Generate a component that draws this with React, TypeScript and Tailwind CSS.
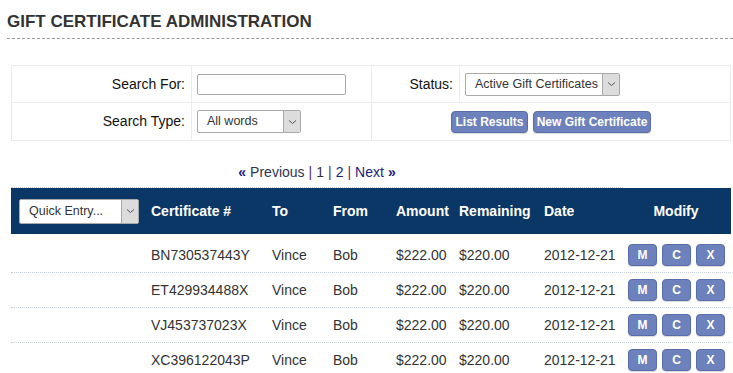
import React from 'react';

const rows = [
  { cert: 'BN730537443Y', to: 'Vince', from: 'Bob', amount: '$222.00', remaining: '$220.00', date: '2012-12-21' },
  { cert: 'ET429934488X', to: 'Vince', from: 'Bob', amount: '$222.00', remaining: '$220.00', date: '2012-12-21' },
  { cert: 'VJ453737023X', to: 'Vince', from: 'Bob', amount: '$222.00', remaining: '$220.00', date: '2012-12-21' },
  { cert: 'XC396122043P', to: 'Vince', from: 'Bob', amount: '$222.00', remaining: '$220.00', date: '2012-12-21' },
];

const cols = 'grid grid-cols-[140px_121px_61px_63px_63px_85px_85px_102px]';

const FakeSelect: React.FC<{ label: string; className: string }> = ({ label, className }) => (
  <div className={`flex items-stretch bg-white border border-[#a9a9a9] rounded-[2px] font-normal ${className}`}>
    <div className="flex-1 flex items-center pl-[9px] text-[12.5px] text-[#333] whitespace-nowrap overflow-hidden">
      {label}
    </div>
    <div className="w-[17px] flex items-center justify-center bg-[#dcdcdc] border-l border-[#a9a9a9]">
      <svg width="9" height="6" viewBox="0 0 9 6" fill="none">
        <path d="M1 1.5 L4.5 4.5 L8 1.5" stroke="#555" strokeWidth="1" />
      </svg>
    </div>
  </div>
);

const BlueButton: React.FC<{ children: React.ReactNode; className?: string }> = ({ children, className }) => (
  <button
    className={`h-[22px] bg-[#6d82bc] border border-[#5a6dab] rounded-[4px] text-white font-bold text-[12px] flex items-center justify-center shadow-[0_1px_1px_rgba(0,0,0,0.15)] ${className ?? ''}`}
  >
    {children}
  </button>
);

export default function App() {
  return (
    <div className="w-[733px] h-[373px] overflow-hidden bg-white pl-[7px] font-['Liberation_Sans',Arial,sans-serif] text-[#333]">
      {/* title */}
      <div className="pt-[13px] pb-[7px] border-b border-dashed border-[#999] text-[17px] font-bold leading-[18px] text-[#333]">
        GIFT CERTIFICATE ADMINISTRATION
      </div>

      {/* search form */}
      <div className="ml-[4px] mt-[26px] w-[720px] border border-[#ececec] grid grid-cols-[180px_180px_88px_1fr] text-[14px] text-[#111]">
        <div className="h-[37px] flex items-center justify-end pr-[6px] border-r border-b border-[#ececec]">Search For:</div>
        <div className="h-[37px] flex items-center pl-[5px] border-r border-b border-[#ececec]">
          <div className="w-[149px] h-[21px] bg-white border border-[#a9a9a9] rounded-[2px]" />
        </div>
        <div className="h-[37px] flex items-center justify-end pr-[6px] border-r border-b border-[#ececec]">Status:</div>
        <div className="h-[37px] flex items-center pl-[5px] border-b border-[#ececec]">
          <FakeSelect label="Active Gift Certificates" className="w-[155px] h-[23px]" />
        </div>
        <div className="h-[37px] flex items-center justify-end pr-[6px] border-r border-[#ececec]">Search Type:</div>
        <div className="h-[37px] flex items-center pl-[5px] border-r border-[#ececec]">
          <FakeSelect label="All words" className="w-[104px] h-[23px]" />
        </div>
        <div className="col-span-2 h-[37px] flex items-center justify-center gap-[5px]">
          <BlueButton className="w-[77px]">List Results</BlueButton>
          <BlueButton className="w-[118px]">New Gift Certificate</BlueButton>
        </div>
      </div>

      {/* pagination */}
      <div className="ml-[4px] w-[612px] h-[47px] flex items-end justify-center pb-[4px] border-b border-dotted border-[#c8c8c8] text-[14px]">
        <span className="text-[#1a237e] font-bold mr-[4px]">«</span>
        <span className="text-[#2e3550]">Previous</span>
        <span className="text-[#5a2a6a] mx-[4px]">|</span>
        <span className="text-[#333]">1</span>
        <span className="text-[#5a2a6a] mx-[4px]">|</span>
        <span className="text-[#1a237e]">2</span>
        <span className="text-[#5a2a6a] mx-[4px]">|</span>
        <span className="text-[#1a237e]">Next</span>
        <span className="text-[#1a237e] font-bold ml-[4px]">»</span>
      </div>

      {/* results header */}
      <div className={`ml-[4px] w-[720px] h-[46px] bg-[#0b3766] text-white font-bold text-[14px] items-center ${cols}`}>
        <div className="pl-[8px]">
          <FakeSelect label="Quick Entry..." className="w-[120px] h-[25px]" />
        </div>
        <div>Certificate #</div>
        <div>To</div>
        <div>From</div>
        <div>Amount</div>
        <div>Remaining</div>
        <div>Date</div>
        <div className="text-center pr-[8px]">Modify</div>
      </div>

      {/* rows */}
      <div className="ml-[4px] w-[720px] mt-[4px] text-[14px] text-[#333]">
        {rows.map((r) => (
          <div key={r.cert} className={`h-[35px] items-center border-b border-dotted border-[#c5d0dc] ${cols}`}>
            <div />
            <div>{r.cert}</div>
            <div>{r.to}</div>
            <div>{r.from}</div>
            <div>{r.amount}</div>
            <div>{r.remaining}</div>
            <div>{r.date}</div>
            <div className="flex gap-[5px] -ml-[1px]">
              <BlueButton className="w-[29px]">M</BlueButton>
              <BlueButton className="w-[29px]">C</BlueButton>
              <BlueButton className="w-[29px]">X</BlueButton>
            </div>
          </div>
        ))}
      </div>
    </div>
  );
}
